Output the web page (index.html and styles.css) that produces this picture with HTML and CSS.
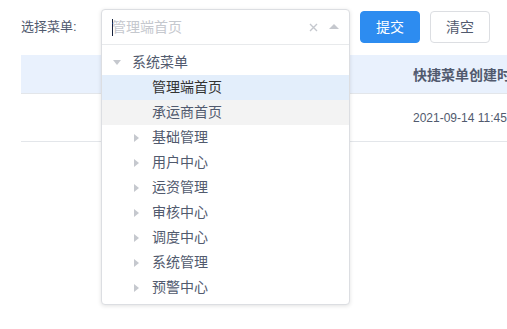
FILE: index.html
```html
<!DOCTYPE html>
<html lang="zh-CN">
<head>
<meta charset="utf-8">
<title>选择菜单</title>
<link rel="stylesheet" href="styles.css">
</head>
<body>
<div class="page">
  <div class="form-row">
    <label class="form-label">选择菜单:</label>
    <div class="select">
      <div class="select-panel">
        <div class="select-input">
          <span class="caret"></span>
          <span class="placeholder">管理端首页</span>
          <svg class="icon-clear" width="9" height="9" viewBox="0 0 9 9"><path d="M1 1L8 8M8 1L1 8" stroke="#c5c8ce" stroke-width="1.4"/></svg>
          <span class="icon-up"></span>
        </div>
        <ul class="tree">
          <li class="node lv1"><span class="arrow-box"><span class="tri-down"></span></span><span class="title">系统菜单</span></li>
          <li class="node lv2 selected"><span class="arrow-box"></span><span class="title">管理端首页</span></li>
          <li class="node lv2 hover"><span class="arrow-box"></span><span class="title">承运商首页</span></li>
          <li class="node lv2"><span class="arrow-box"><span class="tri-right"></span></span><span class="title">基础管理</span></li>
          <li class="node lv2"><span class="arrow-box"><span class="tri-right"></span></span><span class="title">用户中心</span></li>
          <li class="node lv2"><span class="arrow-box"><span class="tri-right"></span></span><span class="title">运资管理</span></li>
          <li class="node lv2"><span class="arrow-box"><span class="tri-right"></span></span><span class="title">审核中心</span></li>
          <li class="node lv2"><span class="arrow-box"><span class="tri-right"></span></span><span class="title">调度中心</span></li>
          <li class="node lv2"><span class="arrow-box"><span class="tri-right"></span></span><span class="title">系统管理</span></li>
          <li class="node lv2"><span class="arrow-box"><span class="tri-right"></span></span><span class="title">预警中心</span></li>
        </ul>
      </div>
    </div>
    <button class="btn btn-primary">提交</button>
    <button class="btn btn-default">清空</button>
  </div>
  <div class="table">
    <div class="thead">
      <div class="cell"></div>
      <div class="cell th">快捷菜单创建时间</div>
    </div>
    <div class="trow">
      <div class="cell"></div>
      <div class="cell td">2021-09-14 11:45:20</div>
    </div>
  </div>
</div>
</body>
</html>
```

FILE: styles.css
```css
* { box-sizing: border-box; }
html, body { margin: 0; padding: 0; background: #fff; overflow: hidden; }
body {
  font-family: "Liberation Sans", "Noto Sans CJK SC", sans-serif;
  color: #515a6e;
  width: 507px;
  height: 329px;
}
.page { padding: 9px 0 0 21px; }
.form-row {
  display: flex;
  align-items: center;
  height: 36px;
}
.form-label {
  width: 80px;
  font-size: 13px;
  line-height: 18px;
  color: #515a6e;
}
.select {
  position: relative;
  width: 249px;
  height: 36px;
  margin-right: 10px;
}
.select-panel {
  position: absolute;
  top: 0;
  left: 0;
  width: 249px;
  background: #fff;
  border: 1px solid #dcdee2;
  border-radius: 4px;
  box-shadow: 0 1px 4px rgba(0,0,0,0.12);
  z-index: 10;
}
.select-input {
  display: flex;
  align-items: center;
  height: 35px;
  padding-left: 10px;
  border-bottom: 1px solid #e8eaec;
}
.caret {
  width: 1px;
  height: 17px;
  background: #17233d;
  margin-right: -1px;
}
.placeholder {
  font-size: 14px;
  line-height: 20px;
  color: #c5c8ce;
  flex: 1;
}
.icon-clear { margin-right: 11px; }
.icon-up {
  width: 0;
  height: 0;
  border-left: 5px solid transparent;
  border-right: 5px solid transparent;
  border-bottom: 5px solid #c5c8ce;
  margin-right: 10px;
  margin-top: -1px;
}
.tree {
  list-style: none;
  margin: 0;
  padding: 5px 0 4px;
}
.node {
  display: flex;
  align-items: center;
  height: 25px;
  font-size: 14px;
  line-height: 25px;
  color: #515a6e;
}
.node.lv1 { padding-left: 11px; }
.node.lv1 .arrow-box { width: 19px; }
.node.lv2 { padding-left: 32px; }
.node.lv2 .arrow-box { width: 18px; }
.arrow-box { display: flex; align-items: center; height: 25px; }
.tri-down {
  width: 0; height: 0;
  border-left: 4px solid transparent;
  border-right: 4px solid transparent;
  border-top: 5px solid #c5c8ce;
}
.tri-right {
  width: 0; height: 0;
  border-top: 4px solid transparent;
  border-bottom: 4px solid transparent;
  border-left: 5px solid #c5c8ce;
}
.node.selected { background: #e3eefb; color: #333; }
.node.hover { background: #f3f3f3; }
.btn {
  height: 32px;
  width: 60px;
  border-radius: 4px;
  font-family: "Liberation Sans", "Noto Sans CJK SC", sans-serif;
  font-size: 14px;
  line-height: 20px;
  padding: 0;
  margin-right: 10px;
  cursor: pointer;
}
.btn-primary { background: #2d8cf0; border: 1px solid #2d8cf0; color: #fff; }
.btn-default { background: #fff; border: 1px solid #dcdee2; color: #515a6e; }
.table {
  margin-top: 10px;
  width: 620px;
}
.thead, .trow {
  display: grid;
  grid-template-columns: 374px 246px;
}
.thead {
  height: 39px;
  background: #e9f1fd;
  border-bottom: 1px solid #e3e6ea;
}
.trow {
  height: 48px;
  border-bottom: 1px solid #e3e6ea;
}
.cell {
  display: flex;
  align-items: center;
  padding-left: 18px;
  white-space: nowrap;
}
.th { font-size: 14px; font-weight: bold; color: #515a6e; }
.td { font-size: 12px; color: #515a6e; }
```
